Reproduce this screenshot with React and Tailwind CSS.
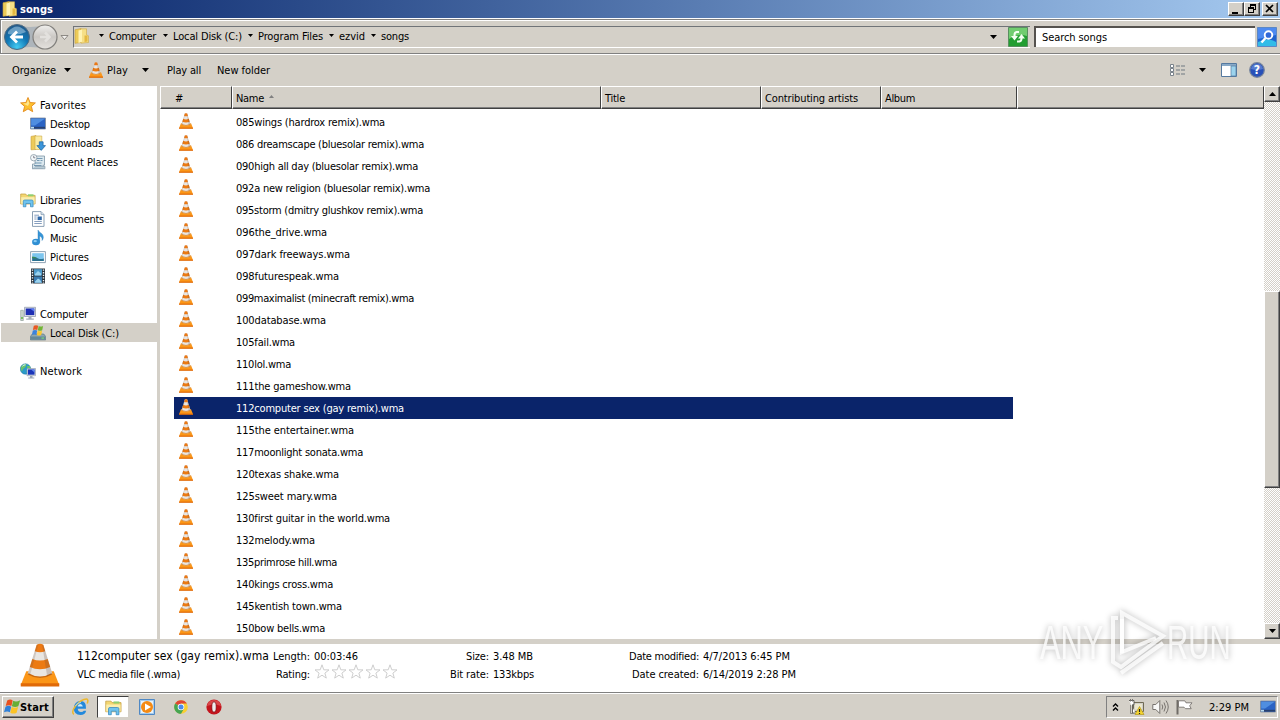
import { useLayoutEffect, useRef, useState } from "react";

const files = [
  ["085wings (hardrox remix).wma", 149],
  ["086 dreamscape (bluesolar remix).wma", 188],
  ["090high all day (bluesolar remix).wma", 182],
  ["092a new religion (bluesolar remix).wma", 194],
  ["095storm (dmitry glushkov remix).wma", 187],
  ["096the_drive.wma", 91],
  ["097dark freeways.wma", 114],
  ["098futurespeak.wma", 103],
  ["099maximalist (minecraft remix).wma", 178],
  ["100database.wma", 90],
  ["105fail.wma", 59],
  ["110lol.wma", 55],
  ["111the gameshow.wma", 115],
  ["112computer sex (gay remix).wma", 168],
  ["115the entertainer.wma", 118],
  ["117moonlight sonata.wma", 127],
  ["120texas shake.wma", 103],
  ["125sweet mary.wma", 101],
  ["130first guitar in the world.wma", 154],
  ["132melody.wma", 79],
  ["135primrose hill.wma", 101],
  ["140kings cross.wma", 97],
  ["145kentish town.wma", 106],
  ["150bow bells.wma", 89],
];
const selected = 13;

// Spreads letter spacing so the text takes w pixels
function Label({ w, className = "", children }) {
  const ref = useRef(null);
  const [spacing, setSpacing] = useState(0);
  useLayoutEffect(() => {
    const natural = ref.current.getBoundingClientRect().width;
    setSpacing((w - natural) / children.length);
  }, []);
  return (
    <span
      ref={ref}
      className={`inline-block shrink-0 whitespace-pre translate-y-px ${className}`}
      style={{ letterSpacing: `${spacing}px` }}
    >
      {children}
    </span>
  );
}

function Cone({ size }) {
  return (
    <svg width={size} height={size} viewBox="0 0 16 16" className="shrink-0">
      <path d="M3 10.300h10l2 5H1z" fill="#fb9618" />
      <path d="M1 14.600h14v1.200H1z" fill="#e06a08" />
      <path d="M6.800.600Q8 0 9.200.600L12.500 11.200Q8 13.800 3.500 11.200z" fill="#e9e6e2" />
      <path d="M6.800.600Q8 0 9.200.600l.7 2.400Q8 3.700 6.100 3z" fill="#ee7a14" />
      <path d="M5.200 5.800Q8 7 10.800 5.800l.9 2.900Q8 10.300 4.300 8.700z" fill="#ec7a12" />
      <path d="M3.700 11.200Q8 13.700 12.300 11.200" fill="none" stroke="#c9680f" strokeWidth=".5" />
      <path d="M8.800.600h.4l3.300 10.600-1.900.9z" fill="#6e5040" opacity=".25" />
      <path d="M6.800.600L3.500 11.200l.9.500L7.400.600z" fill="#6e5040" opacity=".2" />
    </svg>
  );
}

function Folder({ size = 16 }) {
  return (
    <svg width={size} height={size} viewBox="0 0 16 16" className="shrink-0">
      <path d="M1 1.800l6-1.300v14l-6 .8z" fill="#eccb58" stroke="#c7a03c" strokeWidth=".6" />
      <path d="M7 .800h5.500v6l2 1v6.700L7 15.200z" fill="#f6df86" stroke="#cda744" strokeWidth=".6" />
      <path d="M4.500 2.500l3.500-1v12.200L4.500 15z" fill="#fff3b4" />
      <path d="M10.500 7.500h3v6l-3 .5z" fill="#e4b840" />
    </svg>
  );
}

function LibraryIcon({ size = 16 }) {
  return (
    <svg width={size} height={size} viewBox="0 0 16 16" className="shrink-0">
      <path d="M.7 2h5l1 1.4h8.400V12H.7z" fill="#f3d671" stroke="#c29b3d" strokeWidth=".7" />
      <path d="M1.2 5.2h13.4v6.6H1.2z" fill="#fbeeae" />
      <path d="M8 2.300h5.500v2H8z" fill="#8fcf70" />
      <path d="M3.3 14.8V9.2q0-1.2 1.4-1.2h7q1.4 0 1.4 1.2v5.600h-2.600v-3.300H5.900v3.300z" fill="#6fc3ee" stroke="#3486bd" strokeWidth=".7" />
    </svg>
  );
}

function Monitor() {
  return (
    <svg width="16" height="16" viewBox="0 0 16 16" className="shrink-0">
      <path d="M.5 2h15v11H.5z" fill="#2a63c4" stroke="#7f8c9c" strokeWidth=".8" />
      <path d="M1.2 2.700h13.600L5 9.500H1.200z" fill="#4f8ee0" />
      <path d="M1 10.800h14v1.800H1z" fill="#27406e" />
      <path d="M1 10.800h3v1.800H1z" fill="#b9dcf0" />
    </svg>
  );
}

function NavIcon({ kind }) {
  if (kind === "libraries") return <LibraryIcon />;
  if (kind === "desktop") return <Monitor />;
  return (
    <svg width="16" height="16" viewBox="0 0 16 16" className="shrink-0">
      {kind === "favorites" && (
        <>
          <path d="M8 .5l2.100 5 5.300.4-4 3.500 1.300 5.300L8 11.900 3.300 14.700l1.300-5.300-4-3.500 5.300-.4z" fill="#fdc02f" stroke="#e38a1c" strokeWidth=".9" />
          <path d="M8 2.500l1.300 3.700L8 9 3 6.600l3.600-.4z" fill="#ffe58c" />
        </>
      )}
      {kind === "downloads" && (
        <>
          <path d="M1 1.400l5-.9v14l-5 .3z" fill="#edcb5a" stroke="#c7a03c" strokeWidth=".6" />
          <path d="M5 1h6.800v13.500H5z" fill="#faeba2" stroke="#cda744" strokeWidth=".6" />
          <path d="M9.300 6.800h3.800v3.800h2.400l-4.300 4.800-4.300-4.800h2.400z" fill="#3b95da" stroke="#1d639f" strokeWidth=".7" />
        </>
      )}
      {kind === "recent" && (
        <>
          <path d="M5 2h9.500v9.200h-1.300v3.300H2.500V10H5z" fill="#dbe8ef" stroke="#7d94a3" strokeWidth=".8" />
          <path d="M7 4.500h5.500M7 6.500h2.500M10.500 6.500H12.500M5 9h6.500M4 11.500h7.500" stroke="#6a91ab" strokeWidth=".9" />
          <path d="M2 14.800h13v-2.500H5" fill="#b8cbd6" stroke="#7d94a3" strokeWidth=".6" />
          <circle cx="3.700" cy="3.700" r="3.200" fill="#f4f8fa" stroke="#8b9ba6" strokeWidth=".8" />
          <path d="M3.700 1.800v2h1.600" stroke="#556" strokeWidth=".7" fill="none" />
        </>
      )}
      {kind === "documents" && (
        <>
          <path d="M2.500.600h8.500l3 3v11.800H2.500z" fill="#fff" stroke="#7e95ad" strokeWidth=".9" />
          <path d="M11 .600v3h3" fill="#cfdeea" stroke="#7e95ad" strokeWidth=".7" />
          <path d="M4.300 4.200H9M4.300 6h2.300M4.300 8h2.300M4.300 10.500h7.500M4.300 12.500h7.500" stroke="#7793b8" strokeWidth=".9" />
          <path d="M7.600 5.500h4.200v3.600H7.600z" fill="#2d67a8" />
        </>
      )}
      {kind === "music" && (
        <>
          <path d="M8 0c1 3 5.700 3.200 5.300 7.700-.2 1.400-.8 2.200-1.300 2.800.6-2.800-1-4.200-2.300-4.600v6.500H8z" fill="#3796d8" stroke="#2478b9" strokeWidth=".4" />
          <ellipse cx="6" cy="12" rx="3.900" ry="3.300" fill="#2f8fd3" />
          <ellipse cx="5.200" cy="11.200" rx="1.700" ry="1.100" fill="#8bccf2" />
        </>
      )}
      {kind === "pictures" && (
        <>
          <path d="M.600 2.600h14.800v11H.600z" fill="#fff" stroke="#8499ac" strokeWidth=".9" />
          <path d="M2.200 4.200h11.600v7.800H2.200z" fill="#7cc5ee" />
          <path d="M2.200 8q4 .2 6 1.400t5.600 0V12H2.200z" fill="#29708f" />
          <path d="M2.200 7.500q3 0 5.500 1.800H2.200z" fill="#3b8a54" />
        </>
      )}
      {kind === "videos" && (
        <>
          <path d="M1 .5h14v15H1z" fill="#2b343c" />
          <path d="M4 1.200h8v6.300H4z" fill="#4d9bcb" />
          <path d="M4 8.500h8v6.300H4z" fill="#387ab0" />
          <path d="M5 6l3-3 3 2.500v2H5zM5 13.500l3-3 2 1.200 2 3H5z" fill="#9bd3ef" />
          <path d="M2.500 1.500v14M13.500 1.500v14" stroke="#eef4f7" strokeWidth="1.400" strokeDasharray="1.300 1.300" />
        </>
      )}
      {kind === "computer" && (
        <>
          <path d="M.7 4.300h2.600v10.200H.7z" fill="#cfd8d2" stroke="#85958d" strokeWidth=".6" />
          <path d="M1.200 11h1.600v2H1.200z" fill="#65b748" />
          <path d="M4.500 1.300h11v9.200h-11z" fill="#dfe3ea" stroke="#8a93a5" strokeWidth=".7" />
          <path d="M5.700 2.500h8.600v6.600H5.700z" fill="#1e2fb4" />
          <path d="M10 2.500h4.300v3.300z" fill="#5a7cf0" />
          <path d="M8.500 10.700h3v1.700h2.300v1.400H6.200v-1.400h2.300z" fill="#a5adba" />
        </>
      )}
      {kind === "disk" && (
        <>
          <path d="M2.300 9h11.400l2 2.500v3.400H.4v-3.400z" fill="#8da6b2" stroke="#587583" strokeWidth=".7" />
          <path d="M.8 11.500h14.400v3H.8z" fill="#648998" />
          <path d="M11.500 12.500h2.500v1.200h-2.500z" fill="#7bd879" />
          <path d="M3.800 .8q2.200-1.200 4.400 0l-.9 4.200q-2.200-1.100-4.400 0z" fill="#e85a24" />
          <path d="M8.700 1q2.200 1 4.400 0l-.9 4.200q-2.200 1-4.400 0z" fill="#71b534" />
          <path d="M2.800 5.600q2.200-1.100 4.400 0l-.9 4.300q-2.200-1.100-4.400 0z" fill="#3b83dc" />
          <path d="M7.700 5.800q2.200 1 4.400 0l-.9 4.300q-2.200 1-4.400 0z" fill="#fbc72c" />
        </>
      )}
      {kind === "network" && (
        <>
          <circle cx="5.500" cy="6" r="5.200" fill="#2b9bc9" stroke="#1b6f9e" strokeWidth=".5" />
          <path d="M1.500 3q2.500-2.500 5-2l-1 3-2.500 2-1 2.500Q0 6 1.500 3zM7 3l3 0q1 3 0 5L7.500 6z" fill="#69c36a" />
          <path d="M2.500 3.200q1.300-1.600 3-1.400" stroke="#d7f4ff" strokeWidth="1" fill="none" />
          <path d="M7 5.500h8.500v7.200H7z" fill="#dde3ea" stroke="#8a93a5" strokeWidth=".6" />
          <path d="M7.900 6.400h6.700v5.300H7.900z" fill="#1b35b9" />
          <path d="M11 6.400h3.600v3z" fill="#6189ef" />
          <path d="M10 13h2.500v1.400h1.800v1H8.200v-1H10z" fill="#9ca7b7" />
        </>
      )}
    </svg>
  );
}

function WinFlag() {
  return (
    <svg width="17" height="16" viewBox="0 0 17 16" className="shrink-0">
      <path d="M3.200 1.600q3-2 5.500-.2L7.400 7Q4.800 5.400 1.700 7z" fill="#e8501e" />
      <path d="M9.200 1.700q3 1.600 7-.5L14.300 7.200q-3 1.600-6.400.1z" fill="#67ae35" />
      <path d="M1.500 7.700q3-1.700 5.700 0l-1.300 5.600Q3.300 11.600 0 13.300z" fill="#2f80d8" />
      <path d="M7.700 8q3 1.500 6.400 0l-1.500 5.700q-3 1.700-6.300 0z" fill="#fbc325" />
    </svg>
  );
}

function Arrow({ className = "" }) {
  return (
    <svg width="7" height="4" viewBox="0 0 7 4" className={`shrink-0 ${className}`}>
      <path d="M0 0h7L3.500 4z" fill="#000" />
    </svg>
  );
}

function SmallArrow({ className = "" }) {
  return (
    <svg width="5" height="3" viewBox="0 0 5 3" className={`shrink-0 ${className}`}>
      <path d="M0 0h5L2.500 3z" fill="#000" />
    </svg>
  );
}

const raised = "bg-[#d4d0c8] border border-t-white border-l-white border-r-[#404040] border-b-[#404040] shadow-[inset_-1px_-1px_0_#808080]";

function TitleBar() {
  return (
    <div className="h-[18px] flex items-center bg-linear-to-r from-[#0a246a] to-[#a6caf0] pl-[2px] pr-[2px]">
      <Folder />
      <Label w={33} className="ml-[2px] text-white font-bold">songs</Label>
      <div className="flex-1" />
      <div className={`w-4 h-[14px] ${raised}`}>
        <svg width="14" height="12"><path d="M3 9h6v2H3z" /></svg>
      </div>
      <div className={`w-4 h-[14px] ${raised}`}>
        <svg width="14" height="12" fill="none" stroke="#000" shapeRendering="crispEdges">
          <path d="M5 1.500h6M5 2.500h6M5.500 1v3M10.500 1v6M9 6.500h2M3 4.500h6M3 5.500h6M3.500 4v6M8.500 4v6M3 9.500h6" />
        </svg>
      </div>
      <div className={`w-4 h-[14px] ml-[2px] ${raised}`}>
        <svg width="14" height="12"><path d="M3 2l7 7M10 2L3 9" stroke="#000" strokeWidth="1.700" /></svg>
      </div>
    </div>
  );
}

const crumbs = [
  ["Computer", 47, "ml-[9px]"],
  ["Local Disk (C:)", 69, "ml-[7px]"],
  ["Program Files", 65, "ml-[6px]"],
  ["ezvid", 26, "ml-[6px]"],
  ["songs", 28, "ml-[6px]"],
];

function AddressBar() {
  return (
    <div className="h-[36px] flex items-center border-t border-b border-t-white border-b-[#808080] shadow-[inset_1px_1px_0_#808080,inset_2px_2px_0_#fff,0_1px_0_#fff] pt-px pl-[4px] pr-[1px]">
      <svg width="66" height="28" viewBox="0 0 66 28" className="shrink-0">
        <defs>
          <radialGradient id="back" cx="50%" cy="90%" r="90%">
            <stop offset="0" stopColor="#44cbf2" />
            <stop offset=".5" stopColor="#1177b5" />
            <stop offset="1" stopColor="#225787" />
          </radialGradient>
          <linearGradient id="forward" x1="0" y1="0" x2="0" y2="1">
            <stop offset="0" stopColor="#f0efed" />
            <stop offset=".5" stopColor="#cbc8c4" />
            <stop offset="1" stopColor="#e5e2de" />
          </linearGradient>
        </defs>
        <path d="M12 2q14 4 29 0v24q-15-4-29 0z" fill="#aeb5bb" />
        <circle cx="13" cy="14" r="12.500" fill="url(#back)" stroke="#506b81" />
        <path d="M4 9Q13-2 22 9q-8 4-18 2z" fill="#b7d8ed" opacity=".5" />
        <path d="M19 14H8M13 8.500L7.500 14l5.500 5.500" stroke="#fff" strokeWidth="2.800" fill="none" />
        <circle cx="41" cy="14" r="12" fill="url(#forward)" stroke="#82807d" strokeWidth="1.200" />
        <path d="M36 14h9M41 9.500l4.500 4.500-4.500 4.500" stroke="#e3e1de" strokeWidth="2.500" fill="none" />
        <path d="M57 12.500h7l-3.500 4z" fill="#f2f0ed" stroke="#77736e" strokeWidth=".8" />
      </svg>
      <div className="ml-[3px] w-[957px] h-[22px] flex items-center border-t border-l border-[#707478] border-b border-b-white pb-[2px]">
        <Folder />
        {crumbs.map(([name, w, gap]) => (
          <div key={name} className="flex items-center">
            <SmallArrow className={gap} />
            <Label w={w} className="ml-[5px]">{name}</Label>
          </div>
        ))}
        <div className="flex-1" />
        <Arrow className="mr-[33px] mt-[2px]" />
      </div>
      <svg width="20" height="20" viewBox="0 0 20 20" className="shrink-0 -ml-[22px]">
        <path d="M.500.500h19v19H.500z" fill="#239e32" stroke="#598f60" />
        <path d="M1 1h18v8Q10 6 1 12z" fill="#71cd70" />
        <path d="M11 5H8.500Q6.500 5.500 6.500 8v2M9 14.500h2.500q2-.5 2-3V10" fill="none" stroke="#f4fff2" strokeWidth="2" />
        <path d="M3 9h7l-3.500 4.500zM10 11.500h7L13.500 7z" fill="#f4fff2" />
      </svg>
      <div className="ml-[6px] w-[221px] h-[21px] bg-white border-t-2 border-l-2 border-[#55524e] flex items-center pb-[2px]">
        <Label w={65} className="ml-[6px]">Search songs</Label>
      </div>
      <svg width="20" height="20" viewBox="0 0 20 20" className="ml-[2px] shrink-0">
        <path d="M.500.500h19v19H.500z" fill="#1f63ce" stroke="#5c88c4" />
        <path d="M1 1h18v7L1 12z" fill="#4d8af0" />
        <path d="M1 15q9-5 18 0v4H1z" fill="#32bce8" />
        <circle cx="11.500" cy="8" r="3.800" fill="#3268d8" stroke="#fff" strokeWidth="1.900" />
        <path d="M8.500 11l-4 4.500" stroke="#fff" strokeWidth="2.400" />
      </svg>
    </div>
  );
}

function Toolbar() {
  return (
    <div className="h-[32px] flex items-center pl-[12px] pr-[15px]">
      <Label w={44}>Organize</Label>
      <Arrow className="ml-[8px]" />
      <div className="ml-[17px]"><Cone size={16} /></div>
      <Label w={21} className="ml-[3px]">Play</Label>
      <Arrow className="ml-[14px]" />
      <Label w={34} className="ml-[18px]">Play all</Label>
      <Label w={53} className="ml-[16px]">New folder</Label>
      <div className="flex-1" />
      <svg width="16" height="13" viewBox="0 0 16 13" className="mr-[8px]">
        {[0.5, 4.5, 8.5].map((y) => (
          <g key={y}>
            <path d={`M.5 ${y}h3v3h-3z`} fill="#fff" stroke="#79828b" />
            <path d={`M6 ${y + 1.5}h4M11 ${y + 1.5}h4`} stroke="#6f7880" />
          </g>
        ))}
      </svg>
      <Arrow className="ml-[5px]" />
      <svg width="16" height="14" viewBox="0 0 16 14" className="ml-[15px]">
        <path d="M.500.500h15v13H.500z" fill="#fff" stroke="#55799f" />
        <path d="M1 1h14v2H1z" fill="#88a9c7" />
        <path d="M10 3h5v10h-5z" fill="#9bd3ed" stroke="#55799f" strokeWidth=".700" />
      </svg>
      <svg width="16" height="16" viewBox="0 0 16 16" className="ml-[12px]">
        <circle cx="8" cy="8" r="7.300" fill="#2850b8" stroke="#77859c" strokeWidth="1.200" />
        <path d="M2 7Q3 2 8 2t6 5Q8 9 2 7z" fill="#7396dd" opacity=".6" />
        <text x="8" y="12.300" textAnchor="middle" fill="#fff" fontSize="12" fontWeight="bold">?</text>
      </svg>
    </div>
  );
}

const nav = [
  ["favorites", "Favorites", 46, false],
  ["desktop", "Desktop", 40, true],
  ["downloads", "Downloads", 53, true],
  ["recent", "Recent Places", 68, true],
  null,
  ["libraries", "Libraries", 41, false],
  ["documents", "Documents", 54, true],
  ["music", "Music", 27, true],
  ["pictures", "Pictures", 39, true],
  ["videos", "Videos", 32, true],
  null,
  ["computer", "Computer", 48, false],
  ["disk", "Local Disk (C:)", 69, true],
  null,
  ["network", "Network", 42, false],
];

function Sidebar() {
  return (
    <div className="w-[157px] pt-[9px] shrink-0 bg-white">
      {nav.map((item, i) =>
        item ? (
          <div
            key={i}
            className={`h-[19px] flex items-center ${item[3] ? "pl-[29px]" : "pl-[19px]"} ml-px gap-[4px] ${item[0] === "disk" ? "bg-[#d4d0c8]" : ""}`}
          >
            <NavIcon kind={item[0]} />
            <Label w={item[2]}>{item[1]}</Label>
          </div>
        ) : (
          <div key={i} className="h-[19px]" />
        )
      )}
    </div>
  );
}

function HeaderCell({ className, children }) {
  return (
    <div className={`h-[23px] flex items-center pt-px border-t border-t-white border-l border-l-white border-r border-r-[#404040] border-b border-b-[#404040] shadow-[inset_0_-1px_0_#808080] bg-[#d4d0c8] ${className}`}>
      {children}
    </div>
  );
}

function FileList() {
  return (
    <div className="flex-1 bg-white">
      <div className="flex">
        <HeaderCell className="w-[72px] pl-[14px]"><Label w={8}>#</Label></HeaderCell>
        <HeaderCell className="w-[369px] pl-[3px]">
          <Label w={28}>Name</Label>
          <svg width="5" height="3" className="ml-[5px] -mt-[3px]"><path d="M2.500 0L5 3H0z" fill="#808080" /></svg>
        </HeaderCell>
        <HeaderCell className="w-[160px] pl-[3px]"><Label w={20}>Title</Label></HeaderCell>
        <HeaderCell className="w-[120px] pl-[3px]"><Label w={93}>Contributing artists</Label></HeaderCell>
        <HeaderCell className="w-[136px] pl-[3px]"><Label w={30}>Album</Label></HeaderCell>
        <HeaderCell className="flex-1" />
      </div>
      <div className="pt-[2px]">
        {files.map(([name, w], i) => (
          <div
            key={name}
            className={`h-[22px] ml-[14px] w-[839px] pl-[4px] flex items-center ${i === selected ? "bg-[#0a246a] text-white" : ""}`}
          >
            <div className="mb-[2px]"><Cone size={16} /></div>
            <Label w={w} className="ml-[42px]">{name}</Label>
          </div>
        ))}
      </div>
    </div>
  );
}

function ScrollBar() {
  return (
    <div className="w-4 flex flex-col bg-[repeating-conic-gradient(#d4d0c8_0_25%,#fff_0_50%)] bg-size-[2px_2px]">
      <div className={`h-4 flex items-center justify-center ${raised}`}>
        <Arrow className="rotate-180" />
      </div>
      <div className={`mt-[189px] h-[197px] ${raised}`} />
      <div className="flex-1" />
      <div className={`h-4 flex items-center justify-center ${raised}`}>
        <Arrow />
      </div>
    </div>
  );
}

function DetailsPane() {
  return (
    <div className="h-[48px] bg-white flex pl-[18px]">
      <div className="w-[59px] -mt-[1px]"><Cone size={44} /></div>
      <div className="w-[193px] pt-[3px]">
        <div className="h-[18px] leading-[16px] text-[12px]"><Label w={192}>112computer sex (gay remix).wma</Label></div>
        <div className="h-[18px] leading-[18px]"><Label w={103}>VLC media file (.wma)</Label></div>
      </div>
      <div className="w-[40px] pt-[3px] leading-[18px] flex flex-col items-end">
        <Label w={37}>Length:</Label>
        <Label w={34}>Rating:</Label>
      </div>
      <div className="w-[130px] pl-[4px] pt-[3px] leading-[18px] flex flex-col">
        <Label w={44} className="self-start">00:03:46</Label>
        <svg width="84" height="16" viewBox="0 0 84 16" className="-mt-px">
          {[0, 17, 34, 51, 68].map((x) => (
            <path key={x} transform={`translate(${x} 0)`} d="M8 .800l1.800 5 5.200.1-4.100 3.200 1.400 5L8 11.200l-4.300 2.900 1.400-5L1 5.900l5.200-.1z" fill="#fff" stroke="#c8c8c8" strokeWidth=".900" />
          ))}
        </svg>
      </div>
      <div className="w-[49px] pt-[3px] leading-[18px] flex flex-col items-end">
        <Label w={23}>Size:</Label>
        <Label w={39}>Bit rate:</Label>
      </div>
      <div className="w-[135px] pl-[4px] pt-[3px] leading-[18px] flex flex-col items-start">
        <Label w={40}>3.48 MB</Label>
        <Label w={41}>133kbps</Label>
      </div>
      <div className="w-[75px] pt-[3px] leading-[18px] flex flex-col items-end">
        <Label w={70}>Date modified:</Label>
        <Label w={67}>Date created:</Label>
      </div>
      <div className="pl-[4px] pt-[3px] leading-[18px] flex flex-col items-start">
        <Label w={87}>4/7/2013 6:45 PM</Label>
        <Label w={93}>6/14/2019 2:28 PM</Label>
      </div>
    </div>
  );
}

function Taskbar() {
  return (
    <div className="h-[28px] border-t border-[#808080] shadow-[inset_0_1px_0_#fff] flex items-center pt-px pl-[2px] pr-[2px]">
      <div className={`w-[52px] h-[22px] flex items-center pl-px ${raised}`}>
        <WinFlag />
        <Label w={29} className="-ml-px font-bold">Start</Label>
      </div>
      <svg width="18" height="18" viewBox="0 0 18 18" className="ml-[17px]">
        <path d="M15 10.800H6.700Q7.200 14 10 14q2 0 2.800-1.300h2.400Q14 17 9.500 17 2.800 16.800 2.800 10.300 3.300 3.300 9.600 3.100q6 .3 5.400 7.700z" fill="#2389dc" />
        <path d="M6.600 8.400h5.200Q11.500 5.900 9.200 5.900q-2.200.2-2.600 2.500z" fill="#d4ecf9" />
        <path d="M2.800 16.300Q0 14 4.500 8 10.500 1 15.500 1.100q2.300.3.700 4.500" fill="none" stroke="#ecb82d" strokeWidth="1.500" />
        <path d="M4.500 8Q6 4.600 10 4.500" stroke="#9ed9fa" fill="none" />
      </svg>
      <div className="ml-[8px] w-[32px] h-[22px] bg-white border border-t-[#404040] border-l-[#404040] border-b-[#d4d0c8] border-r-[#d4d0c8] flex items-center justify-center">
        <LibraryIcon size={17} />
      </div>
      <svg width="16" height="16" viewBox="0 0 16 16" className="ml-[10px]">
        <path d="M.500.500h15v15H.500z" fill="#a4cbed" stroke="#4f88c4" />
        <path d="M2 2h12v12H2z" fill="#e8f3fb" />
        <circle cx="8" cy="8" r="6" fill="#f48a14" />
        <path d="M6 4.500l6 3.500-6 3.500z" fill="#fff" />
      </svg>
      <svg width="14" height="14" viewBox="0 0 14 14" className="ml-[19px]">
        <circle cx="7" cy="7" r="6.800" fill="#f8cf32" />
        <path d="M7 7L1.100 3.600A6.800 6.800 0 0 1 12.900 3.600H7z" fill="#df4535" />
        <path d="M7 7l-5.900-3.400A6.800 6.800 0 0 0 7 13.800L9.900 8.700z" fill="#46a552" />
        <circle cx="7" cy="7" r="3.300" fill="#fff" />
        <circle cx="7" cy="7" r="2.500" fill="#4a8bea" />
      </svg>
      <svg width="16" height="16" viewBox="0 0 16 16" className="ml-[18px]">
        <circle cx="8" cy="8" r="7.600" fill="#c3151d" />
        <path d="M1 7Q2 1 8 1t7 6Q8 4 1 7z" fill="#ea6967" opacity=".600" />
        <ellipse cx="8" cy="8" rx="2.200" ry="5.200" fill="#eee" stroke="#74090f" strokeWidth=".700" />
      </svg>
      <div className="flex-1" />
      <div className="h-[22px] w-[172px] flex items-center border border-t-[#808080] border-l-[#808080] border-r-white border-b-white">
        <svg width="7" height="9" className="ml-[5px]" fill="none" stroke="#000" strokeWidth="1.400">
          <path d="M1 3.500l2.500-2.500L6 3.500M1 7.500L3.500 5 6 7.500" />
        </svg>
        <svg width="17" height="16" viewBox="0 0 17 16" className="ml-[9px]">
          <path d="M5.500 3.500h10v9h-10z" fill="#d2d0c9" stroke="#716b55" />
          <path d="M7 5h7v5.500H7z" fill="#ece8cd" />
          <path d="M1 1.500h5v4.200H4.500V14h3" fill="#fff" stroke="#55534f" strokeWidth=".900" />
          <path d="M2.500 6v8.500h3" stroke="#77736e" strokeWidth=".800" fill="none" />
          <path d="M2.500 0v2.500M4.500 0v2.500" stroke="#77736e" />
          <path d="M11.500 7.500l4.500 8H7z" fill="#f5d52f" stroke="#a88c12" strokeWidth=".600" />
          <path d="M11.500 10v3M11.500 14v1" stroke="#222" strokeWidth="1.200" />
        </svg>
        <svg width="17" height="16" viewBox="0 0 17 16" className="ml-[7px]" fill="none" stroke="#77736e">
          <path d="M.800 5.500h3l4-4v13l-4-4h-3z" fill="#f8f8f7" />
          <path d="M10 5.500q1.500 2.500 0 5M12 3.500q3 4.500 0 9M14 1.500q4.500 6.500 0 13" />
        </svg>
        <svg width="17" height="16" viewBox="0 0 17 16" className="ml-[7px]">
          <path d="M1.500 1v14.500" stroke="#706c67" strokeWidth="2" />
          <path d="M2.500 1.800h6.300l1.200 2h6l-2.300 3 1.500 2.900H9.500L8 8.200H2.500z" fill="#fff" stroke="#77736e" strokeWidth=".900" />
        </svg>
        <Label w={40} className="ml-[16px]">2:29 PM</Label>
        <div className="ml-[11px]"><Monitor /></div>
      </div>
    </div>
  );
}

function Watermark() {
  return (
    <svg
      width="212"
      height="76"
      viewBox="-4 -2 212 76"
      className="absolute left-[1030px] top-[602px] pointer-events-none drop-shadow-[0_0_3px_rgba(0,0,0,0.35)]"
    >
      <g fill="#fff" fillOpacity=".8" fontFamily="Liberation Sans, Arial, sans-serif" fontSize="49">
        <text transform="translate(6 55) scale(.63 1)">ANY</text>
        <text transform="translate(133 55) scale(.6 1)">RUN</text>
      </g>
      <g fill="none" stroke="#fff" strokeOpacity=".8" strokeWidth="4">
        <path d="M88 49V9l41 23-42 31-8-5V14h5" />
        <path d="M88 15v33l34-14M87 69l42-30" />
      </g>
    </svg>
  );
}

export default function App() {
  return (
    <div className="relative w-[1280px] h-[720px] overflow-hidden flex flex-col bg-[#d4d0c8] text-black text-[11px] leading-[14px] font-['DejaVu_Sans_Condensed','DejaVu_Sans',sans-serif]">
      <TitleBar />
      <AddressBar />
      <Toolbar />
      <div className="h-[553px] flex">
        <Sidebar />
        <div className="w-[3px] bg-[#d4d0c8]" />
        <FileList />
        <ScrollBar />
      </div>
      <div className="h-[5px]" />
      <DetailsPane />
      <Taskbar />
      <Watermark />
    </div>
  );
}
